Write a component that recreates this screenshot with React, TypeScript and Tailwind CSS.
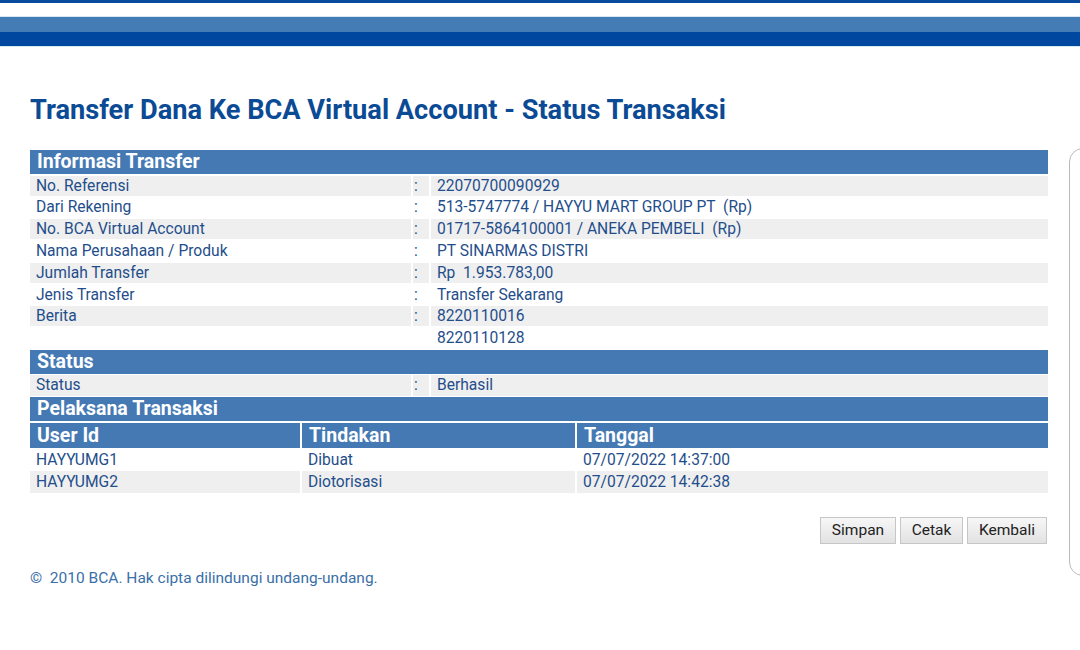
import React from "react";

const labelCls = "text-[15.6px] text-[#1f4e8b] leading-[20px] whitespace-pre";

function Header({ children }: { children: React.ReactNode }) {
  return (
    <div className="h-[24px] bg-[#4479b4] px-[7px] text-[19.5px] font-bold leading-[24px] text-white">
      {children}
    </div>
  );
}

function InfoRow({ label, value, gray, colon = true }: { label: string; value: string; gray: boolean; colon?: boolean }) {
  const bg = gray ? "bg-[#efefef]" : "bg-white";
  return (
    <div className="grid h-[20.2px] grid-cols-[381px_16px_1fr] gap-x-[2px]">
      <div className={`${bg} pl-[6px] ${labelCls}`}>{label}</div>
      <div className={`${bg} pl-[1px] ${labelCls}`}>{colon ? ":" : ""}</div>
      <div className={`${bg} pl-[6px] ${labelCls}`}>{value}</div>
    </div>
  );
}

function UserRow({ a, b, c, gray }: { a: string; b: string; c: string; gray: boolean }) {
  const bg = gray ? "bg-[#efefef]" : "bg-white";
  return (
    <div className="grid h-[20.2px] grid-cols-[270px_273px_1fr] gap-x-[2px]">
      <div className={`${bg} pl-[6px] ${labelCls} leading-[22px]`}>{a}</div>
      <div className={`${bg} pl-[6px] ${labelCls} leading-[22px]`}>{b}</div>
      <div className={`${bg} pl-[6px] ${labelCls} leading-[22px]`}>{c}</div>
    </div>
  );
}

function Btn({ children, w }: { children: React.ReactNode; w: string }) {
  return (
    <button
      className={`${w} h-[27px] border border-[#c6c6c6] bg-gradient-to-b from-[#f7f7f7] to-[#e2e2e2] text-[15.5px] leading-[25px] text-[#222]`}
    >
      {children}
    </button>
  );
}

export default function App() {
  return (
    <div className="relative h-[650px] w-[1080px] overflow-hidden bg-white" style={{ fontFamily: "Roboto, 'Noto Sans', sans-serif" }}>
      {/* top bars */}
      <div className="h-[3px] bg-[#0a4a9c]" />
      <div className="h-[14px] border-b border-[#d5e6f5] bg-white" />
      <div className="h-[15px] bg-[#447cb5]" />
      <div className="h-[14px] bg-[#0047a0]" />
      <div className="h-px bg-[#d6e9f7]" />

      <div className="pl-[30px] pr-[32px]">
        <h1 className="mt-[48px] text-[27.2px] font-bold leading-[30px] text-[#0b4a95]">
          Transfer Dana Ke BCA Virtual Account - Status Transaksi
        </h1>

        <div className="mt-[25px] flex flex-col gap-y-[1.6px]">
          <Header>Informasi Transfer</Header>
          <InfoRow label="No. Referensi" value="22070700090929" gray />
          <InfoRow label="Dari Rekening" value="513-5747774 / HAYYU MART GROUP PT  (Rp)" gray={false} />
          <InfoRow label="No. BCA Virtual Account" value="01717-5864100001 / ANEKA PEMBELI  (Rp)" gray />
          <InfoRow label="Nama Perusahaan / Produk" value="PT SINARMAS DISTRI" gray={false} />
          <InfoRow label="Jumlah Transfer" value="Rp  1.953.783,00" gray />
          <InfoRow label="Jenis Transfer" value="Transfer Sekarang" gray={false} />
          <InfoRow label="Berita" value="8220110016" gray />
          <InfoRow label="" value="8220110128" gray={false} colon={false} />
          <Header>Status</Header>
          <InfoRow label="Status" value="Berhasil" gray />
          <Header>Pelaksana Transaksi</Header>
          <div className="grid h-[25px] grid-cols-[270px_273px_1fr] gap-x-[2px]">
            <div className="bg-[#4479b4] px-[7px] text-[19.5px] font-bold leading-[25px] text-white">User Id</div>
            <div className="bg-[#4479b4] px-[7px] text-[19.5px] font-bold leading-[25px] text-white">Tindakan</div>
            <div className="bg-[#4479b4] px-[7px] text-[19.5px] font-bold leading-[25px] text-white">Tanggal</div>
          </div>
          <UserRow a="HAYYUMG1" b="Dibuat" c="07/07/2022 14:37:00" gray={false} />
          <UserRow a="HAYYUMG2" b="Diotorisasi" c="07/07/2022 14:42:38" gray />
        </div>

        <div className="mt-[25.5px] flex justify-end gap-x-[4px] pr-[1px]">
          <Btn w="w-[76px]">Simpan</Btn>
          <Btn w="w-[63px]">Cetak</Btn>
          <Btn w="w-[80px]">Kembali</Btn>
        </div>

        <div className="mt-[24px] text-[15.5px] leading-[20px] text-[#3a6fa8]">
          ©&nbsp; 2010 BCA. Hak cipta dilindungi undang-undang.
        </div>
      </div>

      {/* right side rounded panel edge */}
      <div className="absolute left-[1069px] top-[148px] h-[428px] w-[40px] rounded-[14px] border-[1.5px] border-[#b9b9b9]" />
    </div>
  );
}
